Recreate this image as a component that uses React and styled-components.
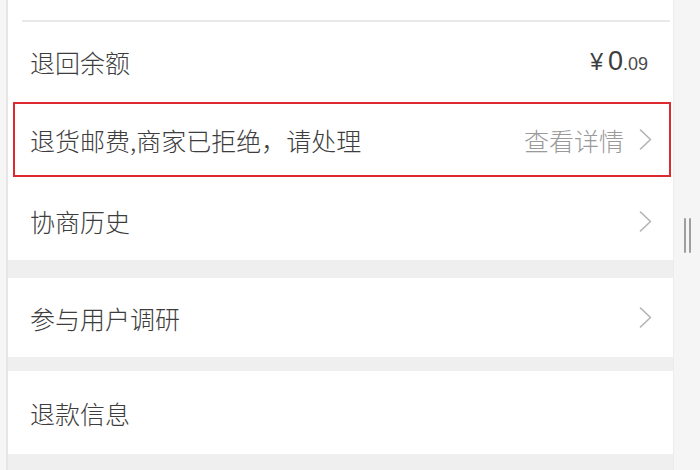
import React from "react";
import styled, { createGlobalStyle } from "styled-components";

const GlobalStyle = createGlobalStyle`
  html, body {
    margin: 0;
    padding: 0;
    background: #f5f5f5;
    overflow: hidden;
  }
  body {
    font-family: "Noto Sans CJK SC", "Noto Sans", sans-serif;
  }
`;

const Page = styled.div`
  display: flex;
  width: 700px;
  height: 470px;
  overflow: hidden;
`;

const LeftGutter = styled.div`
  width: 6px;
  background: #f6f6f6;
  border-right: 2px solid #e6e6e6;
  flex-shrink: 0;
`;

const Panel = styled.div`
  width: 665px;
  display: flex;
  flex-direction: column;
  background: #efefef;
  flex-shrink: 0;
`;

const Group = styled.div`
  background: #fff;
  display: flex;
  flex-direction: column;
`;

const Band = styled.div`
  height: ${(p) => p.$h}px;
  background: #efefef;
  flex-shrink: 0;
`;

const Divider = styled.div`
  height: 2px;
  margin: 0 3px 0 14px;
  background: #e9e9e9;
`;

const TopSpacer = styled.div`
  height: 20px;
`;

const Row = styled.div`
  display: flex;
  align-items: center;
  justify-content: space-between;
  height: ${(p) => p.$h}px;
  padding: ${(p) => p.$pt || 0}px 21px 0 22px;
  box-sizing: border-box;
  flex-shrink: 0;
`;

const HighlightRow = styled(Row)`
  margin: 1px 2px 0 5px;
  padding-left: 15px;
  padding-right: 17px;
  border: 2px solid #dc2a2e;
`;

const Label = styled.span`
  font-size: 25px;
  font-weight: 300;
  color: #3d3d3d;
`;

const Side = styled.div`
  display: flex;
  align-items: center;
  gap: 15px;
`;

const Hint = styled.span`
  font-size: 25px;
  font-weight: 300;
  color: #9a9a9a;
`;

const Price = styled.span`
  margin-right: 4px;
  color: #3d3d3d;
  font-family: "Liberation Sans", Arial, sans-serif;
  display: flex;
  align-items: baseline;
`;

const Yen = styled.span`
  font-size: 23px;
  margin-right: 5px;
`;

const Int = styled.span`
  font-size: 27px;
  font-weight: 300;
`;

const Dec = styled.span`
  font-size: 18px;
  color: #4a4a4a;
`;

const RightGutter = styled.div`
  flex: 1;
  background: #f5f5f5;
  border-left: 1px solid #ececec;
  padding: 218px 0 0 10px;
`;

const Thumb = styled.div`
  display: flex;
  gap: 3px;
  height: 35px;
`;

const ThumbLine = styled.div`
  width: 2px;
  background: #9e9e9e;
  border-radius: 1px;
`;

const Chevron = () => (
  <svg width="13" height="21" viewBox="0 0 13 21" fill="none">
    <polyline
      points="1.5,1 11.5,10.5 1.5,20"
      stroke="#b3b3b3"
      strokeWidth="1.6"
      strokeLinejoin="round"
      strokeLinecap="round"
    />
  </svg>
);

export default function App() {
  return (
    <>
      <GlobalStyle />
      <Page>
        <LeftGutter />
        <Panel>
          <Group>
            <TopSpacer />
            <Divider />
            <Row $h={79}>
              <Label>退回余额</Label>
              <Price>
                <Yen>¥</Yen>
                <Int>0</Int>
                <Dec>.09</Dec>
              </Price>
            </Row>
            <HighlightRow $h={75}>
              <Label>退货邮费,商家已拒绝，请处理</Label>
              <Side>
                <Hint>查看详情</Hint>
                <Chevron />
              </Side>
            </HighlightRow>
            <Row $h={83} $pt={5}>
              <Label>协商历史</Label>
              <Chevron />
            </Row>
          </Group>
          <Band $h={18} />
          <Group>
            <Row $h={79}>
              <Label>参与用户调研</Label>
              <Chevron />
            </Row>
          </Group>
          <Band $h={14} />
          <Group>
            <Row $h={83}>
              <Label>退款信息</Label>
            </Row>
          </Group>
          <Band $h={20} />
        </Panel>
        <RightGutter>
          <Thumb>
            <ThumbLine />
            <ThumbLine />
          </Thumb>
        </RightGutter>
      </Page>
    </>
  );
}
